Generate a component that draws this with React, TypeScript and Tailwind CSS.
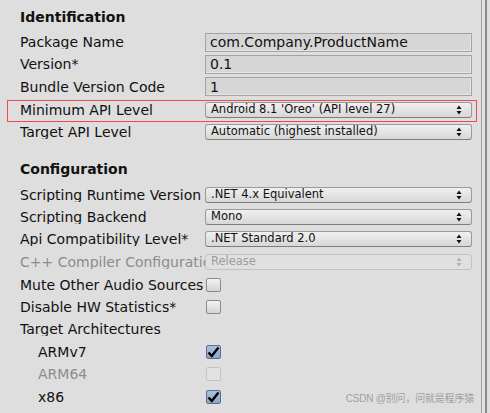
import React from 'react'

const font = { fontFamily: '"DejaVu Sans", Verdana, sans-serif' }

function Label({ text, disabled = false, indent = false }: { text: string; disabled?: boolean; indent?: boolean }) {
  return (
    <div
      className={`w-[185px] shrink-0 whitespace-nowrap overflow-hidden text-[14px] leading-none ${indent ? 'pl-[18px]' : ''} ${disabled ? 'text-[#8c8c8c]' : 'text-[#111]'}`}
    >
      {text}
    </div>
  )
}

function TextField({ value }: { value: string }) {
  return (
    <div className="flex-1 h-[19px] flex items-center px-[4px] bg-[#d6d6d6] border border-[#a3a3a3] shadow-[inset_-1px_-1px_0_#e6e6e6] text-[14px] leading-none text-[#111]">
      {value}
    </div>
  )
}

function Arrows({ disabled = false }: { disabled?: boolean }) {
  const c = disabled ? '#b0b0b0' : '#111'
  return (
    <svg width="6" height="10" viewBox="0 0 6 10">
      <path d="M3 0.5 L5.5 4 L0.5 4 Z" fill={c} />
      <path d="M3 9.5 L5.5 6 L0.5 6 Z" fill={c} />
    </svg>
  )
}

function Dropdown({ value, disabled = false }: { value: string; disabled?: boolean }) {
  return (
    <div
      className={`flex-1 h-[16px] flex items-center justify-between pl-[5px] pr-[9px] rounded-[3px] border text-[11.5px] leading-none ${
        disabled
          ? 'border-[#c2c2c2] bg-[#e0e0e0] text-[#9c9c9c]'
          : 'border-[#9a9a9a] border-b-[#7e7e7e] bg-gradient-to-b from-[#f0f0f0] to-[#d7d7d7] text-[#111]'
      }`}
    >
      <span>{value}</span>
      <Arrows disabled={disabled} />
    </div>
  )
}

function Checkbox({ checked = false, disabled = false }: { checked?: boolean; disabled?: boolean }) {
  return (
    <div
      className={`ml-[1px] w-[15px] h-[14px] rounded-[2px] border flex items-center justify-center ${
        checked
          ? 'border-[#5d6f8a] bg-gradient-to-b from-[#a9c0e0] to-[#8aa4c8]'
          : disabled
            ? 'border-[#c4c4c4] bg-[#e2e2e2]'
            : 'border-[#8a8a8a] bg-gradient-to-b from-[#f2f2f2] to-[#d4d4d4]'
      }`}
    >
      {checked && (
        <svg width="13" height="12" viewBox="0 0 13 12">
          <path d="M1.5 6.5 L4.8 10 L11.5 1.5" fill="none" stroke="#000" strokeWidth="2.4" strokeLinejoin="miter" />
        </svg>
      )}
    </div>
  )
}

export default function App() {
  return (
    <div className="w-[490px] h-[413px] bg-[#dedede] flex overflow-hidden relative" style={font}>
      <div className="w-[481px] shrink-0 pt-[5px] pl-[20px] pr-[9px] flex flex-col">
        <div className="h-[24px] flex items-center text-[14px] font-bold text-[#111] leading-none">Identification</div>

        <div className="mt-[2px] h-[22px] flex items-center">
          <Label text="Package Name" />
          <TextField value="com.Company.ProductName" />
        </div>
        <div className="h-[22px] flex items-center">
          <Label text="Version*" />
          <TextField value="0.1" />
        </div>
        <div className="h-[23px] flex items-center">
          <Label text="Bundle Version Code" />
          <TextField value="1" />
        </div>
        <div className="h-[23px] flex items-center relative">
          <div className="absolute left-[-13px] right-[-5px] top-[2px] bottom-[-1px] border border-[#ef4b4b] pointer-events-none" />
          <Label text="Minimum API Level" />
          <Dropdown value="Android 8.1 'Oreo' (API level 27)" />
        </div>
        <div className="h-[22px] flex items-center">
          <Label text="Target API Level" />
          <Dropdown value="Automatic (highest installed)" />
        </div>

        <div className="mt-[14px] h-[24px] flex items-center text-[14px] font-bold text-[#111] leading-none">Configuration</div>

        <div className="mt-[3px] h-[22px] flex items-center">
          <Label text="Scripting Runtime Version" />
          <Dropdown value=".NET 4.x Equivalent" />
        </div>
        <div className="h-[22px] flex items-center">
          <Label text="Scripting Backend" />
          <Dropdown value="Mono" />
        </div>
        <div className="h-[22px] flex items-center">
          <Label text="Api Compatibility Level*" />
          <Dropdown value=".NET Standard 2.0" />
        </div>
        <div className="h-[23px] flex items-center">
          <Label text="C++ Compiler Configuration" disabled />
          <Dropdown value="Release" disabled />
        </div>
        <div className="h-[23px] flex items-center">
          <Label text="Mute Other Audio Sources" />
          <Checkbox />
        </div>
        <div className="h-[22px] flex items-center">
          <Label text="Disable HW Statistics*" />
          <Checkbox />
        </div>
        <div className="h-[22px] flex items-center">
          <Label text="Target Architectures" />
        </div>
        <div className="h-[23px] flex items-center">
          <Label text="ARMv7" indent />
          <Checkbox checked />
        </div>
        <div className="h-[22px] flex items-center">
          <Label text="ARM64" indent disabled />
          <Checkbox disabled />
        </div>
        <div className="h-[23px] flex items-center">
          <Label text="x86" indent />
          <Checkbox checked />
        </div>
      </div>
      <div className="w-[1px] shrink-0 bg-[#a2a2a2]" />
      <div className="w-[3px] shrink-0 bg-[#e2e2e2]" />
      <div className="w-[2px] shrink-0 bg-[#8a8a8a]" />
      <div className="flex-1 bg-[#dedede]" />

      <div
        className="absolute right-[16px] bottom-[9px] text-[10px] leading-none text-[#a0a0a0] tracking-[-0.2px]"
        style={{ fontFamily: '"Liberation Sans", "Noto Sans CJK SC", sans-serif' }}
      >
        CSDN @别问，问就是程序猿
      </div>
    </div>
  )
}
